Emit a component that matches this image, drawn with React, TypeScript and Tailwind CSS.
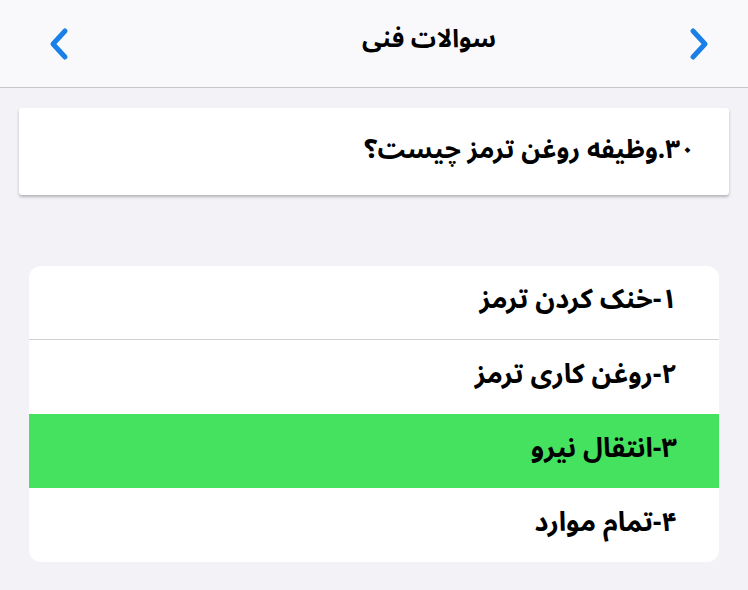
const OPTIONS = [
  { label: '۱-خنک کردن ترمز', correct: false },
  { label: '۲-روغن کاری ترمز', correct: false },
  { label: '۳-انتقال نیرو', correct: true },
  { label: '۴-تمام موارد', correct: false },
];

function Chevron({ dir }: { dir: 'left' | 'right' }) {
  return (
    <svg width="24" height="34" viewBox="0 0 24 34" fill="none">
      <path
        d={dir === 'left' ? 'M19 4 L7 17 L19 30' : 'M5 4 L17 17 L5 30'}
        stroke="#1a7fe6"
        strokeWidth="5"
        strokeLinecap="round"
        strokeLinejoin="round"
      />
    </svg>
  );
}

export default function App() {
  return (
    <div
      dir="rtl"
      className="w-[748px] h-[590px] bg-[#f2f2f7] text-black overflow-hidden"
      style={{ fontFamily: '"Noto Sans Arabic", "DejaVu Sans", sans-serif' }}
    >
      {/* Nav bar */}
      <div className="h-[88px] bg-[#f9f9fb] border-b border-[#c8c8cc] flex items-center justify-between pr-[36px] pl-[46px]">
        <Chevron dir="right" />
        <h1 className="text-[25px] font-bold pb-2 pl-[100px]">سوالات فنی</h1>
        <Chevron dir="left" />
      </div>

      {/* Question */}
      <div className="mx-[19px] mt-[20px] h-[87px] bg-white rounded-[3px] shadow-[0_2px_3px_rgba(0,0,0,0.25)] flex items-center pr-[34px]">
        <p className="text-[26px] font-bold pb-1">۳۰.وظیفه روغن ترمز چیست؟</p>
      </div>

      {/* Options */}
      <div className="mx-[29px] mt-[71px] bg-white rounded-[12px] overflow-hidden">
        {OPTIONS.map((o, i) => (
          <div
            key={i}
            className={
              'h-[74px] flex items-center pr-[42px] ' +
              (o.correct ? 'bg-[#45e25f] ' : '') +
              (i === 0 ? 'border-b border-[#d0d0d4]' : '')
            }
          >
            <span className="text-[27px] font-bold pb-1">{o.label}</span>
          </div>
        ))}
      </div>
    </div>
  );
}
